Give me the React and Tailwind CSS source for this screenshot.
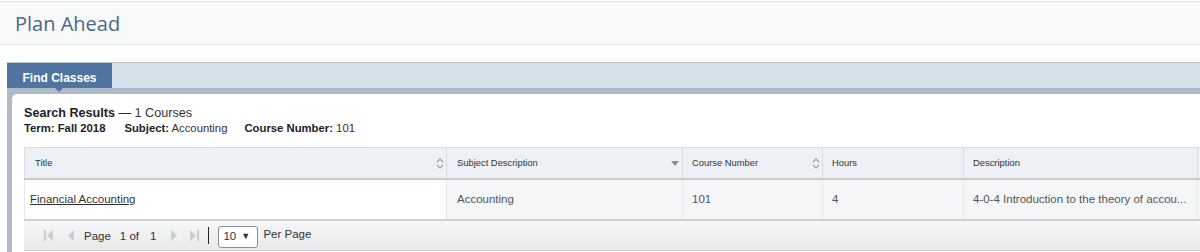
import React from "react";

const SortIcon = () => (
  <svg width="8" height="11" viewBox="0 0 8 11" className="shrink-0">
    <path d="M1 4 L4 1 L7 4" fill="none" stroke="#9aa0a6" strokeWidth="1.2" />
    <path d="M1 7 L4 10 L7 7" fill="none" stroke="#9aa0a6" strokeWidth="1.2" />
  </svg>
);

const DownTri = () => (
  <svg width="8" height="5" viewBox="0 0 8 5" className="shrink-0">
    <path d="M0 0 L8 0 L4 5 Z" fill="#8a8f94" />
  </svg>
);

const First = () => (
  <svg width="9" height="11" viewBox="0 0 9 11">
    <rect x="0" y="0" width="2" height="11" fill="#c9ccd0" />
    <path d="M9 0 L3 5.5 L9 11 Z" fill="#c9ccd0" />
  </svg>
);
const Prev = () => (
  <svg width="7" height="11" viewBox="0 0 7 11">
    <path d="M7 0 L1 5.5 L7 11 Z" fill="#c9ccd0" />
  </svg>
);
const Next = () => (
  <svg width="7" height="11" viewBox="0 0 7 11">
    <path d="M0 0 L6 5.5 L0 11 Z" fill="#c9ccd0" />
  </svg>
);
const Last = () => (
  <svg width="9" height="11" viewBox="0 0 9 11">
    <path d="M0 0 L6 5.5 L0 11 Z" fill="#c9ccd0" />
    <rect x="7" y="0" width="2" height="11" fill="#c9ccd0" />
  </svg>
);

export default function App() {
  const font = { fontFamily: '"Liberation Sans", Arial, sans-serif' };
  return (
    <div className="w-[1200px] h-[252px] overflow-hidden bg-white" style={font}>
      <div className="pt-px">
        <div className="h-[44px] border-t border-b border-t-[#e1e4e7] border-b-[#e2e7e8] bg-[#f8f9fa] flex items-center pl-[15px]">
          <span
            className="text-[20px] text-[#4f6784] leading-none mt-[2px] font-medium"
            style={{ fontFamily: '"Open Sans", sans-serif' }}
          >
            Plan Ahead
          </span>
        </div>
      </div>

      <div className="mt-[17px] ml-[7px] bg-[#adbac8] h-[200px]">
        <div className="h-[26px] border-t border-[#b8c6d2] bg-[#d4e1ea] flex">
          <div className="relative w-[105px] bg-[#4f74a0] text-white text-[12px] font-bold flex justify-center pt-[8px] leading-[14px]">
            Find Classes
            <div className="absolute left-[48px] -bottom-[4px] w-0 h-0 border-l-[4px] border-r-[4px] border-t-[4px] border-l-transparent border-r-transparent border-t-[#4f74a0]" />
          </div>
        </div>
        <div className="pt-[6px] pl-[5px]">
          <div className="bg-white rounded-tl-[5px] pl-[12px] pt-[12px] h-[170px]">
            <div className="text-[12.6px] leading-[15px] text-[#222]">
              <span className="font-bold">Search Results</span>
              <span className="text-[#333]"> — 1 Courses</span>
            </div>
            <div className="text-[11.3px] leading-[14px] text-[#222] flex">
              <span><b>Term:</b> <b>Fall 2018</b></span>
              <span className="ml-[19px]"><b>Subject:</b> <span className="text-[#333]">Accounting</span></span>
              <span className="ml-[17px]"><b>Course Number:</b> <span className="text-[#333]">101</span></span>
            </div>

            <div className="mt-[12px] w-[1250px]">
              {/* header */}
              <div className="grid grid-cols-[422px_236px_140px_141px_234px_1fr] h-[33px] bg-[#edf0f4] border-t border-[#d9dde1] border-b-2 border-b-[#c9cbce] text-[9.4px] text-[#333]">
                <div className="flex items-center justify-between pl-[10px] pr-[2px] border-l border-[#d9dde1]">
                  <span>Title</span>
                  <SortIcon />
                </div>
                <div className="flex items-center justify-between pl-[10px] pr-[3px] border-l border-[#d9dde1]">
                  <span>Subject Description</span>
                  <DownTri />
                </div>
                <div className="flex items-center justify-between pl-[9px] pr-[2px] border-l border-[#d9dde1]">
                  <span>Course Number</span>
                  <SortIcon />
                </div>
                <div className="flex items-center pl-[9px] border-l border-[#d9dde1]">
                  <span>Hours</span>
                </div>
                <div className="flex items-center pl-[9px] border-l border-[#d9dde1]">
                  <span>Description</span>
                </div>
                <div className="border-l border-[#d9dde1]" />
              </div>
              {/* row */}
              <div className="grid grid-cols-[422px_236px_140px_141px_234px_1fr] h-[41px] border-b-2 border-[#cfd1d4] text-[11.5px]">
                <div className="flex items-center pl-[5px] bg-white border-l border-[#e4e6e8]">
                  <span className="underline text-[#333]">Financial Accounting</span>
                </div>
                <div className="flex items-center pl-[10px] bg-[#f5f6f8] border-l border-[#e4e6e8] text-[#555]">
                  Accounting
                </div>
                <div className="flex items-center pl-[9px] bg-[#f5f6f8] border-l border-[#e4e6e8] text-[#555]">
                  101
                </div>
                <div className="flex items-center pl-[9px] bg-[#f5f6f8] border-l border-[#e4e6e8] text-[#555]">
                  4
                </div>
                <div className="flex items-center pl-[9px] bg-[#f5f6f8] border-l border-[#e4e6e8] text-[#555] whitespace-nowrap">
                  4-0-4 Introduction to the theory of accou...
                </div>
                <div className="bg-[#f5f6f8] border-l border-[#e4e6e8]" />
              </div>
              {/* pager */}
              <div className="h-[30px] border-b border-[#cfd2d5] bg-gradient-to-b from-[#f6f7f8] to-[#e7e9eb] flex items-center text-[11.5px] text-[#333] pl-[20px]">
                <First />
                <span className="ml-[14px]"><Prev /></span>
                <span className="ml-[10px] mt-[3px]">Page</span>
                <span className="ml-[9px] mt-[3px]">1 of</span>
                <span className="ml-[11px] mt-[3px]">1</span>
                <span className="ml-[15px]"><Next /></span>
                <span className="ml-[12px]"><Last /></span>
                <span className="ml-[9px] w-px h-[17px] bg-[#222]" />
                <div className="ml-[9px] mt-[2px] w-[40px] h-[22px] border border-[#8a8f95] rounded-[3px] bg-white flex items-center pl-[4px]">
                  <span>10</span>
                  <span className="ml-[5px] text-[9px]">▼</span>
                </div>
                <span className="ml-[5px] -mt-[1px]">Per Page</span>
              </div>
            </div>
          </div>
        </div>
      </div>
    </div>
  );
}
